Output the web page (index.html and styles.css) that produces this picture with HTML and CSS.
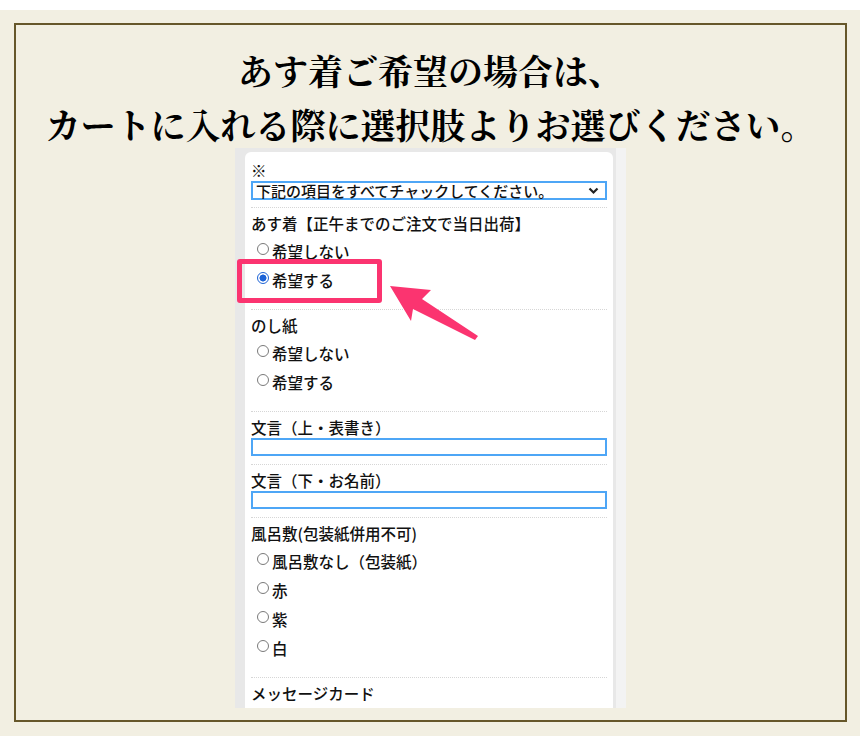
FILE: index.html
```html
<!DOCTYPE html>
<html lang="ja">
<head>
<meta charset="utf-8">
<title>あす着ご希望の場合</title>
<link rel="stylesheet" href="styles.css">
</head>
<body>
<div class="page">
  <div class="frame">
    <h1 class="title">あす着ご希望の場合は、<br>カートに入れる際に選択肢よりお選びください。</h1>
    <div class="shot">
      <div class="card">
        <div class="sec first">
          <div class="lbl">※</div>
          <div class="select">
            <span class="seltext">下記の項目をすべてチャックしてください。</span>
            <svg class="chev" width="11" height="8" viewBox="0 0 11 8"><path d="M1.5 1.5 L5.5 5.5 L9.5 1.5" fill="none" stroke="#222" stroke-width="2.2"/></svg>
          </div>
        </div>
        <div class="sec radios">
          <div class="lbl">あす着【正午までのご注文で当日出荷】</div>
          <div class="opt"><span class="radio"></span>希望しない</div>
          <div class="opt"><span class="radio on"></span>希望する</div>
        </div>
        <div class="sec radios">
          <div class="lbl">のし紙</div>
          <div class="opt"><span class="radio"></span>希望しない</div>
          <div class="opt"><span class="radio"></span>希望する</div>
        </div>
        <div class="sec">
          <div class="lbl">文言（上・表書き）</div>
          <div class="input"></div>
        </div>
        <div class="sec">
          <div class="lbl">文言（下・お名前）</div>
          <div class="input"></div>
        </div>
        <div class="sec radios">
          <div class="lbl">風呂敷(包装紙併用不可)</div>
          <div class="opt"><span class="radio"></span>風呂敷なし（包装紙）</div>
          <div class="opt"><span class="radio"></span>赤</div>
          <div class="opt"><span class="radio"></span>紫</div>
          <div class="opt"><span class="radio"></span>白</div>
        </div>
        <div class="sec">
          <div class="lbl">メッセージカード</div>
        </div>
      </div>
      <div class="highlight"></div>
      <svg class="arrow" width="391" height="560" viewBox="0 0 391 560">
        <polygon points="155,138 196,142 187,151 243,188 240,192 178,161 176,173" fill="#fb3470"/>
      </svg>
    </div>
  </div>
</div>
</body>
</html>
```
FILE: styles.css
```css
html, body {
  margin: 0;
  padding: 0;
  background: #ffffff;
}

.page {
  margin-top: 10px;
  height: 726px;
  background: #f2efe2;
  padding: 13px 13px 14px 14px;
  box-sizing: border-box;
}

.frame {
  height: 100%;
  border: 2px solid #66572a;
  box-sizing: border-box;
  display: flex;
  flex-direction: column;
  align-items: center;
  overflow: hidden;
}

.title {
  margin: 0;
  padding-top: 18px;
  font-family: "Noto Serif CJK JP", "Noto Sans CJK JP", serif;
  font-weight: 700;
  font-size: 35px;
  line-height: 54px;
  text-align: center;
  color: #000000;
  white-space: nowrap;
}

.shot {
  position: relative;
  margin-top: -3px;
  width: 391px;
  height: 560px;
  box-sizing: border-box;
  padding: 4px 13px 0 10px;
  display: flex;
  background: linear-gradient(to right, #e8e8e8 0, #e8e8e8 381px, #f3f3f3 381px);
  overflow: hidden;
}

.card {
  flex: 1;
  background: #ffffff;
  border-radius: 6px 6px 0 0;
  padding: 0 6px;
  font-family: "Noto Sans CJK JP", sans-serif;
  font-weight: 500;
  font-size: 15.5px;
  color: #111111;
}

.sec {
  border-top: 1px dotted #d6d6d6;
  padding: 5px 0 8px;
}

.sec.first {
  border-top: 0;
  padding-top: 8px;
  padding-bottom: 7px;
}

.sec.radios {
  padding-bottom: 15px;
}

.lbl {
  height: 20px;
  line-height: 20px;
  white-space: nowrap;
}

.radios .lbl {
  margin-bottom: 3px;
}

.select,
.input {
  margin-top: 1px;
  height: 18px;
  border: 2px solid #4ea6f6;
  box-sizing: border-box;
  background: #ffffff;
}

.select {
  height: 19px;
  display: flex;
  align-items: center;
  justify-content: space-between;
  padding: 0 6px 0 3px;
  font-size: 15px;
  white-space: nowrap;
}

.seltext {
  line-height: 15px;
}

.chev {
  display: block;
  flex: none;
}

.opt {
  height: 29px;
  display: flex;
  align-items: center;
  padding-left: 6px;
  white-space: nowrap;
}

.radio {
  width: 12px;
  height: 12px;
  border: 1px solid #7a7a7a;
  border-radius: 50%;
  box-sizing: border-box;
  margin-right: 3px;
  position: relative;
  top: -2px;
  background: #ffffff;
  flex: none;
}

.radio.on {
  border-color: #1d63d6;
  background: radial-gradient(circle, #1d63d6 0, #1d63d6 3.2px, #ffffff 3.8px);
}

.highlight {
  position: absolute;
  left: 2px;
  top: 111px;
  width: 145px;
  height: 44px;
  border: 5px solid #fb3470;
  border-radius: 3px;
  box-sizing: border-box;
}

.arrow {
  position: absolute;
  left: 0;
  top: 0;
  pointer-events: none;
}
```
